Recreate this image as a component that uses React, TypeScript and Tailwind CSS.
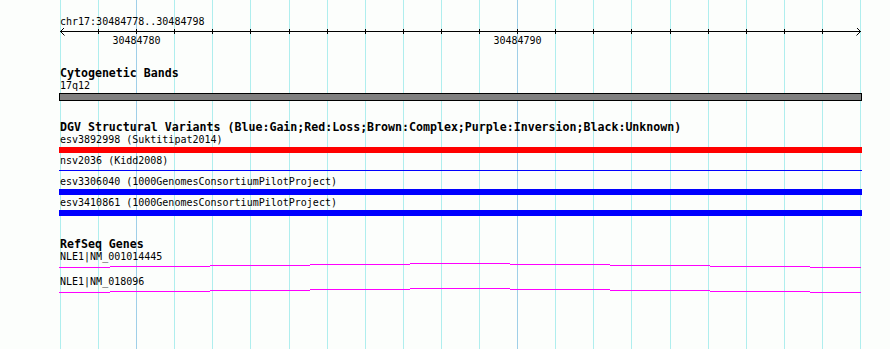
import React from 'react';

// grid columns: 21 bases across 800px starting at x=60
const gridXs = Array.from({ length: 22 }, (_, i) => Math.round(60 + (i * 800) / 21));
const majorXs = [136, 517];

// gene intron line: [x1, x2, yOffset]
const geneSegments: [number, number, number][] = [
  [59, 110, 4],
  [110, 210, 3],
  [210, 310, 2],
  [310, 410, 1],
  [410, 510, 0],
  [510, 610, 1],
  [610, 710, 2],
  [710, 810, 3],
  [810, 861, 4],
];

function Heading({ children, className = '' }: { children: React.ReactNode; className?: string }) {
  return (
    <div className={`h-[13px] whitespace-pre pl-[60px] text-[11.6px] font-bold leading-[13px] ${className}`}>
      {children}
    </div>
  );
}

function Label({ children, className = '' }: { children: React.ReactNode; className?: string }) {
  return <div className={`h-[12px] whitespace-pre pl-[60px] text-[10px] leading-[12px] ${className}`}>{children}</div>;
}

function Variant({ label, color, thin }: { label: string; color: string; thin?: boolean }) {
  return (
    <div className="flex flex-col">
      <Label>{label}</Label>
      <div className="mb-[2px] mt-[1px] h-[6px]">
        {thin ? (
          <div className={`ml-[59px] mt-[2px] h-[1px] w-[803px] ${color}`} />
        ) : (
          <div className={`ml-[59px] h-[6px] w-[803px] ${color}`} />
        )}
      </div>
    </div>
  );
}

function GeneLine() {
  return (
    <svg width={890} height={5} viewBox="0 0 890 5" className="block">
      {geneSegments.map(([a, b, y]) => (
        <rect key={a} x={a} y={y} width={b - a} height={1} fill="#ff00ff" />
      ))}
    </svg>
  );
}

export default function App() {
  return (
    <div className="relative h-[349px] w-[890px] overflow-hidden bg-[#fcfefc] font-['DejaVu_Sans_Mono',monospace] text-black">
      {/* background grid */}
      <svg className="absolute inset-0" width={890} height={349}>
        {gridXs.map((x) => (
          <rect key={x} x={x} y={0} width={1} height={349} fill={majorXs.includes(x) ? '#9fcfe8' : '#afeeee'} />
        ))}
      </svg>

      <div className="relative flex flex-col">
        <Label className="mt-[16px]">chr17:30484778..30484798</Label>

        {/* ruler */}
        <svg width={890} height={20} viewBox="0 28 890 20" className="block">
          <rect x={60} y={31} width={801} height={1} fill="#000" />
          {gridXs.slice(1, -1).map((x) => (
            <rect key={x} x={x} y={29} width={1} height={5} fill="#000" />
          ))}
          <polyline points="64.5,27.5 60.5,31.5 64.5,35.5" fill="none" stroke="#000" strokeWidth={1} />
          <polyline points="856.5,27.5 860.5,31.5 856.5,35.5" fill="none" stroke="#000" strokeWidth={1} />
          <text x={136.5} y={44} textAnchor="middle" fontSize={10} fontFamily="DejaVu Sans Mono, monospace">
            30484780
          </text>
          <text x={517.5} y={44} textAnchor="middle" fontSize={10} fontFamily="DejaVu Sans Mono, monospace">
            30484790
          </text>
        </svg>

        {/* cytogenetic bands */}
        <Heading className="mt-[19px]">Cytogenetic Bands</Heading>
        <Label>17q12</Label>
        <div className="ml-[59px] mt-[1px] h-[8px] w-[803px] border border-black bg-[#808080]" />

        {/* DGV */}
        <Heading className="mt-[20px]">
          DGV Structural Variants (Blue:Gain;Red:Loss;Brown:Complex;Purple:Inversion;Black:Unknown)
        </Heading>
        <Variant label="esv3892998 (Suktitipat2014)" color="bg-[#ff0000]" />
        <Variant label="nsv2036 (Kidd2008)" color="bg-[#0000ff]" thin />
        <Variant label="esv3306040 (1000GenomesConsortiumPilotProject)" color="bg-[#0000ff]" />
        <Variant label="esv3410861 (1000GenomesConsortiumPilotProject)" color="bg-[#0000ff]" />

        {/* RefSeq */}
        <Heading className="mt-[20px]">RefSeq Genes</Heading>
        <Label>NLE1|NM_001014445</Label>
        <GeneLine />
        <Label className="mt-[8px]">NLE1|NM_018096</Label>
        <GeneLine />
      </div>
    </div>
  );
}
